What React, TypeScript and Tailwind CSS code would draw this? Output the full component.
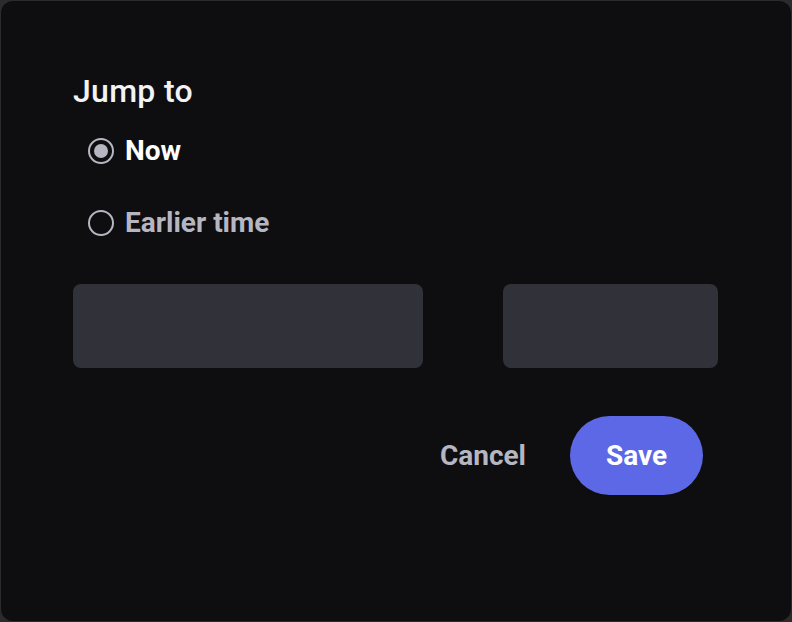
import { useState } from "react";

function Radio({ checked }: { checked: boolean }) {
  return (
    <span className="flex h-[26px] w-[26px] shrink-0 items-center justify-center rounded-full border-[2.5px] border-[#b5b6c1]">
      {checked && <span className="h-[14px] w-[14px] rounded-full bg-[#b5b6c1]" />}
    </span>
  );
}

export default function App() {
  const [mode, setMode] = useState<"now" | "earlier">("now");

  return (
    <div className="h-[622px] w-[792px] bg-[#2b2b2e] p-px font-['Roboto',sans-serif]">
      <div className="h-full w-full rounded-[12px] bg-[#0e0e10] pl-[72px] pr-[73px] pt-[70px]">
        {/* Heading */}
        <h1 className="text-[32px] font-medium leading-[40px] tracking-[0.3px] text-[#f2f3f5]">Jump to</h1>

        {/* Options */}
        <div className="ml-[15px] mt-[16px] flex flex-col gap-[24px]">
          <button
            className="flex h-[48px] items-center gap-[11px] text-left"
            onClick={() => setMode("now")}
          >
            <Radio checked={mode === "now"} />
            <span
              className={
                mode === "now"
                  ? "text-[28px] font-bold leading-[34px] text-white"
                  : "text-[28px] font-bold leading-[34px] text-[#b5b6c1]"
              }
            >
              Now
            </span>
          </button>
          <button
            className="flex h-[48px] items-center gap-[11px] text-left"
            onClick={() => setMode("earlier")}
          >
            <Radio checked={mode === "earlier"} />
            <span
              className={
                mode === "earlier"
                  ? "text-[28px] font-bold leading-[34px] text-white"
                  : "text-[28px] font-bold leading-[34px] text-[#b5b6c1]"
              }
            >
              Earlier time
            </span>
          </button>
        </div>

        {/* Date / time inputs */}
        <div className="mt-[37px] flex justify-between">
          <div className="h-[84px] w-[350px] rounded-[8px] bg-[#31313a]" />
          <div className="h-[84px] w-[215px] rounded-[8px] bg-[#31313a]" />
        </div>

        {/* Actions */}
        <div className="mt-[48px] flex items-center justify-end gap-[44px] pr-[15px]">
          <button className="text-[28px] font-bold leading-[34px] text-[#b5b6c1]">Cancel</button>
          <button className="flex h-[79px] w-[133px] items-center justify-center rounded-full bg-[#5c68e6] text-[28px] font-bold text-white">
            Save
          </button>
        </div>
      </div>
    </div>
  );
}
